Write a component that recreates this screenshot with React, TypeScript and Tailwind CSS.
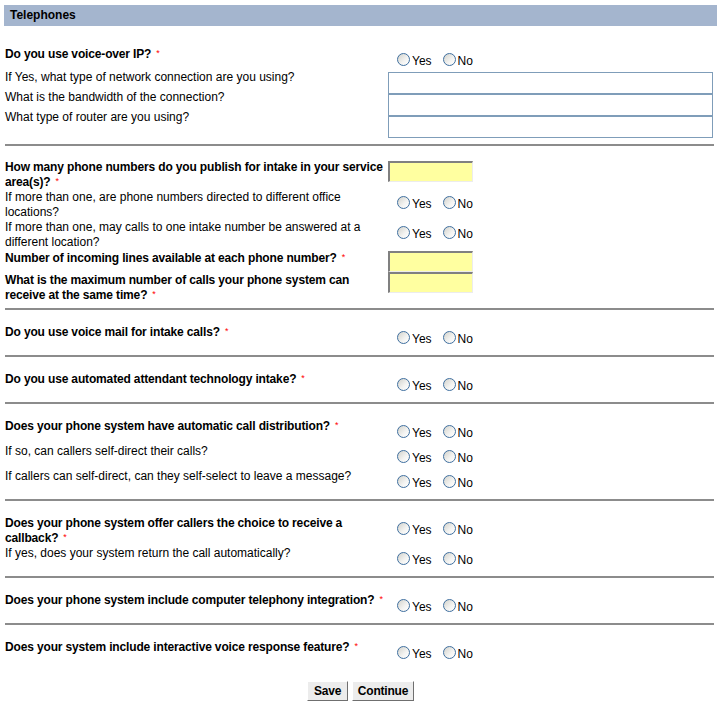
import React from "react";

// small red marker for required questions
const Req = () => (
  <span className="ml-[5px] align-top text-[9px] leading-[12px] font-normal tracking-normal text-[#ff0000]">*</span>
);

const Radio = ({ className = "" }: { className?: string }) => (
  <span
    className={`block h-[13px] w-[13px] shrink-0 rounded-full border border-[#3f6f9f] bg-[linear-gradient(135deg,#d2d2cc_0%,#f4f4f2_60%,#ffffff_100%)] ${className}`}
  />
);

const YesNo = () => (
  <div className="flex h-[25px] items-start pl-[9px] pt-[6px]">
    <Radio />
    <span className="ml-[2px] mt-[1px] leading-[14px]">Yes</span>
    <Radio className="ml-[11px]" />
    <span className="ml-[2px] mt-[1px] leading-[14px]">No</span>
  </div>
);

const TextBox = () => <div className="h-[22px] w-[325px] border border-[#7f9db9] bg-white" />;

const YellowBox = ({ className = "" }: { className?: string }) => (
  <div
    className={`h-[21px] w-[85px] border-t-2 border-l-2 border-r border-b border-t-[#808080] border-l-[#808080] border-r-[#ececec] border-b-[#ececec] bg-[#ffffa0] ${className}`}
  />
);

const Q = ({ children }: { children: React.ReactNode }) => (
  <span className="font-bold tracking-[-0.15px]">{children}</span>
);

interface RowProps {
  label: React.ReactNode;
  right: React.ReactNode;
  labelClass?: string;
}

const Row = ({ label, right, labelClass = "" }: RowProps) => (
  <div className="flex items-start">
    <div className={`w-[383px] shrink-0 whitespace-nowrap leading-[15px] ${labelClass}`}>{label}</div>
    <div>{right}</div>
  </div>
);

const Divider = () => <div className="ml-[5px] h-[2px] w-[709px] bg-[#8c8c8c]" />;

const Section = ({ children, className = "pt-[15px]" }: { children: React.ReactNode; className?: string }) => (
  <div className={`ml-[5px] pb-[5px] ${className}`}>{children}</div>
);

export default function App() {
  return (
    <div className="min-h-[712px] w-[721px] bg-white pt-[5px] font-['Liberation_Sans',Arial,sans-serif] text-[12px] text-black">
      <div className="mx-[4px] h-[21px] bg-[#a4b5ce] pl-[6px] font-bold leading-[21px]">Telephones</div>

      {/* voice over ip */}
      <div className="ml-[5px] mt-[21px] flex pb-[6px]">
        <div className="w-[383px] shrink-0 whitespace-nowrap leading-[15px]">
          <div className="h-[23px]">
            <Q>Do you use voice-over IP?</Q>
            <Req />
          </div>
          <div className="h-[20px]">If Yes, what type of network connection are you using?</div>
          <div className="h-[20px]">What is the bandwidth of the connection?</div>
          <div className="h-[20px]">What type of router are you using?</div>
        </div>
        <div>
          <YesNo />
          <TextBox />
          <TextBox />
          <TextBox />
        </div>
      </div>
      <Divider />

      <Section className="pt-[14px]">
        <Row
          label={
            <>
              <Q>
                How many phone numbers do you publish for intake in your service
                <br />
                area(s)?
              </Q>
              <Req />
            </>
          }
          right={<YellowBox className="mt-[1px]" />}
          labelClass="h-[30px]"
        />
        <Row
          label={
            <>
              If more than one, are phone numbers directed to different office
              <br />
              locations?
            </>
          }
          right={<YesNo />}
          labelClass="h-[30px]"
        />
        <Row
          label={
            <>
              If more than one, may calls to one intake number be answered at a
              <br />
              different location?
            </>
          }
          right={<YesNo />}
          labelClass="h-[30px]"
        />
        <Row
          label={
            <>
              <Q>Number of incoming lines available at each phone number?</Q>
              <Req />
            </>
          }
          right={<YellowBox className="mt-[1px]" />}
          labelClass="h-[22px] pt-[1px]"
        />
        <Row
          label={
            <>
              <Q>
                What is the maximum number of calls your phone system can
                <br />
                receive at the same time?
              </Q>
              <Req />
            </>
          }
          right={<YellowBox />}
          labelClass="h-[31px] pt-[1px]"
        />
      </Section>
      <Divider />

      <Section>
        <Row
          label={
            <>
              <Q>Do you use voice mail for intake calls?</Q>
              <Req />
            </>
          }
          right={<YesNo />}
        />
      </Section>
      <Divider />

      <Section>
        <Row
          label={
            <>
              <Q>Do you use automated attendant technology intake?</Q>
              <Req />
            </>
          }
          right={<YesNo />}
        />
      </Section>
      <Divider />

      <Section>
        <Row
          label={
            <>
              <Q>Does your phone system have automatic call distribution?</Q>
              <Req />
            </>
          }
          right={<YesNo />}
        />
        <Row label="If so, can callers self-direct their calls?" right={<YesNo />} />
        <Row label="If callers can self-direct, can they self-select to leave a message?" right={<YesNo />} />
      </Section>
      <Divider />

      <Section>
        <Row
          label={
            <>
              <Q>
                Does your phone system offer callers the choice to receive a
                <br />
                callback?
              </Q>
              <Req />
            </>
          }
          right={<YesNo />}
          labelClass="h-[30px]"
        />
        <Row label="If yes, does your system return the call automatically?" right={<YesNo />} />
      </Section>
      <Divider />

      <Section>
        <Row
          label={
            <>
              <Q>Does your phone system include computer telephony integration?</Q>
              <Req />
            </>
          }
          right={<YesNo />}
        />
      </Section>
      <Divider />

      <Section className="pt-[15px] pb-0">
        <Row
          label={
            <>
              <Q>Does your system include interactive voice response feature?</Q>
              <Req />
            </>
          }
          right={<YesNo />}
        />
      </Section>

      <div className="mt-[11px] flex justify-center gap-[4px]">
        <button className="h-[20px] w-[41px] border border-t-[#ffffff] border-l-[#ffffff] border-r-[#6f6f6f] border-b-[#6f6f6f] bg-[#ececec] text-[12px] font-bold tracking-[-0.2px] text-black">
          Save
        </button>
        <button className="h-[20px] w-[62px] border border-t-[#ffffff] border-l-[#ffffff] border-r-[#6f6f6f] border-b-[#6f6f6f] bg-[#ececec] text-[12px] font-bold tracking-[-0.2px] text-black">
          Continue
        </button>
      </div>
    </div>
  );
}
